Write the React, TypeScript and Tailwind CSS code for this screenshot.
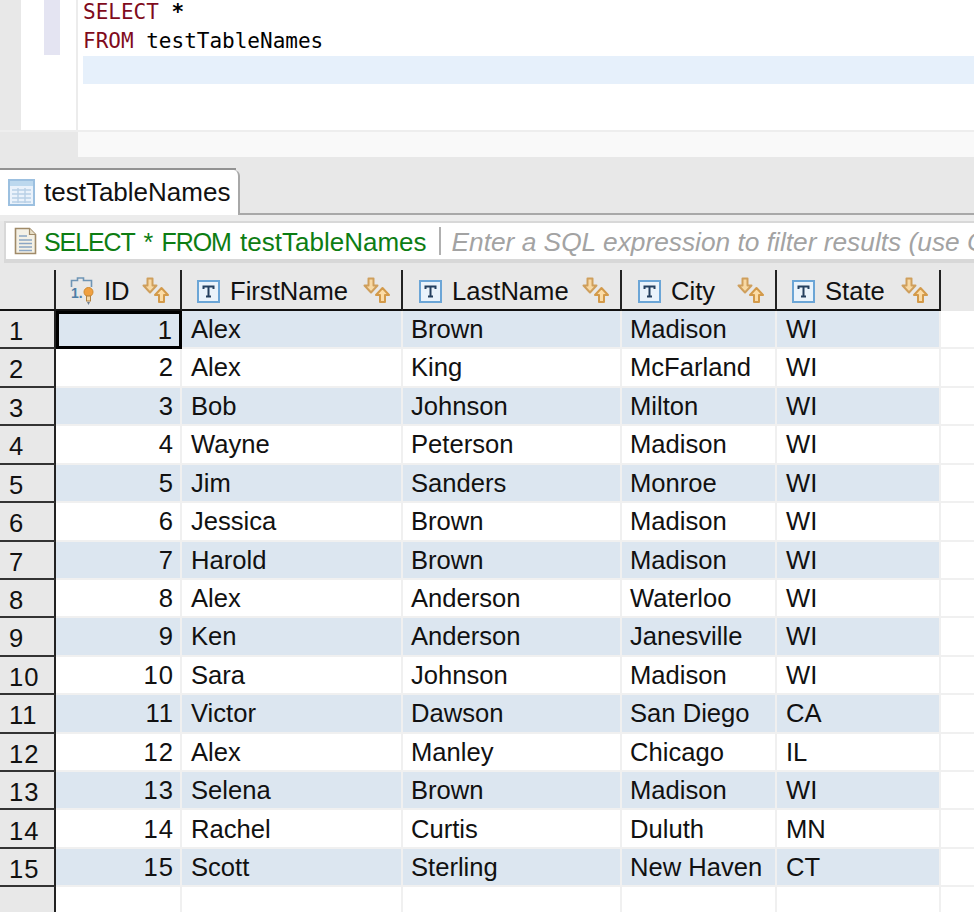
import React from "react";

const rows: [string, string, string, string, string, string][] = [
  ["1", "1", "Alex", "Brown", "Madison", "WI"],
  ["2", "2", "Alex", "King", "McFarland", "WI"],
  ["3", "3", "Bob", "Johnson", "Milton", "WI"],
  ["4", "4", "Wayne", "Peterson", "Madison", "WI"],
  ["5", "5", "Jim", "Sanders", "Monroe", "WI"],
  ["6", "6", "Jessica", "Brown", "Madison", "WI"],
  ["7", "7", "Harold", "Brown", "Madison", "WI"],
  ["8", "8", "Alex", "Anderson", "Waterloo", "WI"],
  ["9", "9", "Ken", "Anderson", "Janesville", "WI"],
  ["10", "10", "Sara", "Johnson", "Madison", "WI"],
  ["11", "11", "Victor", "Dawson", "San Diego", "CA"],
  ["12", "12", "Alex", "Manley", "Chicago", "IL"],
  ["13", "13", "Selena", "Brown", "Madison", "WI"],
  ["14", "14", "Rachel", "Curtis", "Duluth", "MN"],
  ["15", "15", "Scott", "Sterling", "New Haven", "CT"],
];

function SortIcon() {
  return (
    <svg width="30" height="27" viewBox="0 0 30 27" className="shrink-0">
      <path d="M6.500 1.500h5v7h4l-6.500 7-6.500-7h4z" fill="#f8d9a4" stroke="#cf9f5c" strokeWidth="2" strokeLinejoin="round" />
      <path d="M18 25v-7h-4l6.500-7 6.500 7h-4v7z" fill="#fcdca6" stroke="#d39a4a" strokeWidth="2" strokeLinejoin="round" />
    </svg>
  );
}

function TIcon() {
  return (
    <svg width="23" height="23" viewBox="0 0 23 23" className="shrink-0">
      <rect x="1" y="1" width="21" height="21" fill="#eaf3fb" stroke="#6ba5d6" strokeWidth="2" />
      <path d="M6.500 9V6.500h10V9M11.500 6.500v10M9 16.500h5" fill="none" stroke="#25405f" strokeWidth="2" />
    </svg>
  );
}

function IdIcon() {
  return (
    <svg width="24" height="30" viewBox="0 0 24 30" className="shrink-0">
      <path d="M1.500 11V4.500h6V2h6v2.500h8V11" fill="none" stroke="#6f95b5" strokeWidth="1.600" />
      <text x="1" y="22" fontSize="14" fontWeight="700" fill="#4f7ea6" fontFamily="'Liberation Sans', sans-serif">1.</text>
      <circle cx="18.500" cy="16" r="4.500" fill="#f0a040" stroke="#d08a30" strokeWidth="1" />
      <rect x="16.500" y="20" width="4" height="5" fill="#f6d9a8" stroke="#b08040" strokeWidth="1" />
      <path d="M17 26h3l-1.500 3z" fill="#6f7f90" />
    </svg>
  );
}

function TableIcon() {
  return (
    <svg width="27" height="27" viewBox="0 0 27 27" className="shrink-0">
      <rect x="1" y="1" width="25" height="25" fill="#eaf2fb" stroke="#9cc0e0" strokeWidth="2" />
      <rect x="2" y="2" width="23" height="5" fill="#bcd8ee" />
      <path d="M4 11h19M4 15h19M4 19h19M4 23h19M10 9v15M17 9v15" stroke="#b8d0e6" strokeWidth="1.400" fill="none" />
    </svg>
  );
}

function DocIcon() {
  return (
    <svg width="23" height="28" viewBox="0 0 23 28" className="shrink-0">
      <path d="M1.500 1.500h14l6 6v19h-20z" fill="#f4f1e6" stroke="#a08a68" strokeWidth="1.600" />
      <path d="M15.500 1.500v6h6" fill="#e8dfc8" stroke="#a08a68" strokeWidth="1.200" />
      <path d="M5 9h8M5 13h13M5 16.500h13M5 20h13M5 23.500h13" stroke="#8ba6c4" strokeWidth="1.500" />
    </svg>
  );
}

function HeaderCell({ w, label, icon, pl }: { w: string; label: string; icon: React.ReactNode; pl: string }) {
  return (
    <div className={`flex h-full shrink-0 items-center border-r-2 border-b-2 border-r-[#222] border-b-[#111] pt-[3px] ${w} ${pl}`}>
      {icon}
      <span className="ml-[10px] mt-[1px] leading-none">{label}</span>
      <div className="ml-auto mr-[9px] mb-[2px]"><SortIcon /></div>
    </div>
  );
}

const cell = "flex h-full shrink-0 items-center border-r-2 border-b-2 border-[#f0f0f0]";

export default function App() {
  return (
    <div className="flex h-[912px] w-[974px] flex-col overflow-hidden bg-[#e8e8e8] font-['Liberation_Sans',sans-serif] text-[25.6px] text-[#111]">
      <div className="ml-[21px] flex h-[130px] shrink-0 bg-white">
        <div className="h-full w-[57px] shrink-0 border-r-2 border-[#ececec]">
          <div className="ml-[23px] h-[55px] w-[16px] bg-[#e4e4f2]" />
        </div>
        <div className="flex-1 pl-[5px] font-['DejaVu_Sans_Mono',monospace] text-[21px] leading-[28px]">
          <div className="h-[29px] -mt-[2px] text-[#7f0b1c]">SELECT <span className="font-bold text-black">*</span></div>
          <div className="h-[29px] text-[#7f0b1c]">FROM <span className="text-black">testTableNames</span></div>
          <div className="h-[28px] bg-[#e6f0fb]" />
        </div>
      </div>
      <div className="h-[2px] shrink-0 bg-[#eeeeee]" />
      <div className="ml-[78px] h-[25px] shrink-0 bg-[#f9f9f9]" />

      <div className="mt-[11px] h-[2px] w-[236px] shrink-0 bg-[#929292]" />
      <div className="flex h-[45px] shrink-0 items-end">
        <div className="flex h-[45px] w-[240px] shrink-0 items-center rounded-tr-[6px] border-r-2 border-[#a8a8a8] bg-white pl-[8px]">
          <TableIcon />
          <span className="ml-[9px] text-[26px]">testTableNames</span>
        </div>
        <div className="h-[2px] flex-1 bg-[#a8a8a8]" />
      </div>
      <div className="h-[6px] shrink-0 bg-[#ececec]" />

      <div className="ml-[4px] flex h-[42px] shrink-0 items-center overflow-hidden whitespace-nowrap border-t-2 border-b-4 border-l-2 border-[#d8d8d8] bg-white pl-[8px]">
        <DocIcon />
        <span className="ml-[7px] pt-[3px] text-[#0d7d13]">
          <span className="text-[25px] tracking-[-1.1px] [word-spacing:3.5px]">SELECT * FROM </span>
          <span className="text-[26px]">testTableNames</span>
        </span>
        <div className="ml-[12px] h-[28px] w-[2px] shrink-0 bg-[#b0b0b0]" />
        <span className="ml-[11px] pt-[3px] text-[26.3px] italic text-[#a3a3a3]">Enter a SQL expression to filter results (use Ctrl+Space)</span>
      </div>

      <div className="mt-[7px] flex h-[41px] shrink-0">
        <div className="h-full w-[56px] shrink-0 border-r-2 border-b-2 border-r-[#222] border-b-[#111]" />
        <HeaderCell w="w-[126px]" label="ID" pl="pl-[14px]" icon={<IdIcon />} />
        <HeaderCell w="w-[221px]" label="FirstName" pl="pl-[15px]" icon={<TIcon />} />
        <HeaderCell w="w-[219px]" label="LastName" pl="pl-[16px]" icon={<TIcon />} />
        <HeaderCell w="w-[155px]" label="City" pl="pl-[16px]" icon={<TIcon />} />
        <HeaderCell w="w-[164px]" label="State" pl="pl-[15px]" icon={<TIcon />} />
      </div>

      <div className="flex flex-1 flex-col bg-white">
        {rows.map((r, i) => {
          const stripe = i % 2 === 0 ? "bg-[#dce6f0]" : "bg-white";
          return (
            <div key={r[0]} className="flex h-[38.43px] shrink-0">
              <div className="flex h-full w-[56px] shrink-0 items-center border-r-2 border-b-2 border-r-[#222] border-b-[#333] bg-[#e8e8e8] pl-[9px] pt-[4px] tracking-[1px]">{r[0]}</div>
              {i === 0 ? (
                <div className={`flex h-full w-[126px] shrink-0 items-center justify-end border-[3px] border-black pr-[6px] tracking-[1px] ${stripe}`}>{r[1]}</div>
              ) : (
                <div className={`${cell} w-[126px] justify-end pr-[6px] tracking-[1px] ${stripe}`}>{r[1]}</div>
              )}
              <div className={`${cell} w-[221px] pl-[9px] ${stripe}`}>{r[2]}</div>
              <div className={`${cell} w-[219px] pl-[8px] ${stripe}`}>{r[3]}</div>
              <div className={`${cell} w-[155px] pl-[8px] ${stripe}`}>{r[4]}</div>
              <div className={`${cell} w-[164px] pl-[9px] ${stripe}`}>{r[5]}</div>
              <div className="h-full flex-1 border-b-2 border-[#f0f0f0] bg-white" />
            </div>
          );
        })}
        <div className="flex flex-1">
          <div className="w-[56px] shrink-0 border-r-2 border-[#222] bg-[#e8e8e8]" />
          <div className="w-[126px] shrink-0 border-r-2 border-[#f0f0f0]" />
          <div className="w-[221px] shrink-0 border-r-2 border-[#f0f0f0]" />
          <div className="w-[219px] shrink-0 border-r-2 border-[#f0f0f0]" />
          <div className="w-[155px] shrink-0 border-r-2 border-[#f0f0f0]" />
          <div className="w-[164px] shrink-0 border-r-2 border-[#f0f0f0]" />
        </div>
      </div>
    </div>
  );
}
